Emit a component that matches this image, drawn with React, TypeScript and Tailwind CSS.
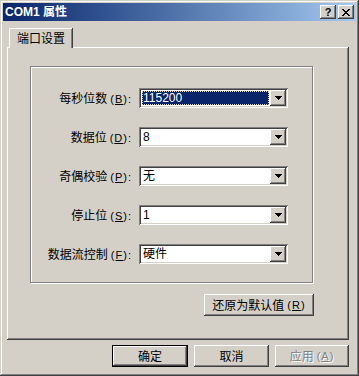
const raised =
  'bg-[#d4d0c8] shadow-[inset_-1px_-1px_#404040,inset_1px_1px_#fff,inset_-2px_-2px_#808080]'
const sunken =
  'bg-white shadow-[inset_1px_1px_#808080,inset_-1px_-1px_#fff,inset_2px_2px_#404040,inset_-2px_-2px_#d4d0c8]'

function Arrow() {
  return (
    <svg width="7" height="4" viewBox="0 0 7 4" shapeRendering="crispEdges">
      <rect x="0" y="0" width="7" height="1" fill="#000" />
      <rect x="1" y="1" width="5" height="1" fill="#000" />
      <rect x="2" y="2" width="3" height="1" fill="#000" />
      <rect x="3" y="3" width="1" height="1" fill="#000" />
    </svg>
  )
}

function Key({ k, colon }: { k: string; colon?: boolean }) {
  return (
    <span className="ml-[3px] tracking-[1px] font-['Liberation_Sans',sans-serif] text-[11px]">
      (<u>{k}</u>){colon ? ':' : ''}
    </span>
  )
}

function Combo({ value, selected }: { value: string; selected?: boolean }) {
  return (
    <div className={`w-[149px] h-[20px] p-[2px] flex ${sunken}`}>
      <div className="flex-1 flex items-center pl-[1px] pr-[1px]">
        {selected ? (
          <span className="w-full h-[14px] flex items-center bg-[#0a246a] text-white outline-1 outline-dotted outline-[#d4d0c8] -outline-offset-1 pl-[1px] font-['Liberation_Sans','Noto_Sans_CJK_SC',sans-serif] text-[12px]">
            {value}
          </span>
        ) : (
          <span className="pl-[1px] font-['Liberation_Sans','Noto_Sans_CJK_SC',sans-serif] text-[12px]">{value}</span>
        )}
      </div>
      <div className={`w-[16px] h-[16px] flex items-center justify-center ${raised}`}>
        <Arrow />
      </div>
    </div>
  )
}

function Row({ label, k, value, selected }: { label: string; k: string; value: string; selected?: boolean }) {
  return (
    <div className="flex items-center h-[20px]">
      <div className="w-[101px] text-right whitespace-nowrap">
        {label}
        <Key k={k} colon />
      </div>
      <div className="ml-[7px]">
        <Combo value={value} selected={selected} />
      </div>
    </div>
  )
}

export default function App() {
  return (
    <div className="w-[359px] h-[376px] bg-[#d4d0c8] p-[3px] flex flex-col shadow-[inset_-1px_-1px_#404040,inset_1px_1px_#d4d0c8,inset_-2px_-2px_#808080,inset_2px_2px_#fff] font-['Noto_Sans_CJK_SC',sans-serif] text-[12px] text-black leading-none">
      {/* title bar */}
      <div className="h-[18px] flex items-center justify-between bg-gradient-to-r from-[#0a246a] to-[#a6caf0] pl-[2px] pr-[2px]">
        <span className="text-white font-bold text-[12px] font-['Liberation_Sans','Noto_Sans_CJK_SC',sans-serif]">COM1 属性</span>
        <div className="flex gap-[2px]">
          <div className={`w-[16px] h-[14px] flex items-center justify-center ${raised}`}>
            <span className="font-['Liberation_Sans',sans-serif] font-bold text-[11px] leading-none">?</span>
          </div>
          <div className={`w-[16px] h-[14px] flex items-center justify-center ${raised}`}>
            <svg width="8" height="7" viewBox="0 0 8 7" shapeRendering="crispEdges">
              <path d="M0 0h2v1h1v1h2V1h1V0h2v1H7v1H6v1H5v1h1v1h1v1h1v1H6V6H5V5H3v1H2v1H0V6h1V5h1V4h1V3H2V2H1V1H0z" fill="#000" />
            </svg>
          </div>
        </div>
      </div>

      {/* tab strip */}
      <div className="pl-[6px] pt-[7px] flex">
        <div className="relative z-10 h-[20px] w-[63px] -mb-[1px] bg-[#d4d0c8] rounded-tl-[2px] border-l border-t border-white shadow-[inset_-1px_0_#808080,1px_0_#404040] flex items-start justify-center pt-[3px]">
          端口设置
        </div>
      </div>

      {/* tab panel */}
      <div className="ml-[4px] w-[342px] h-[293px] flex flex-col shadow-[inset_-1px_-1px_#404040,inset_1px_1px_#fff,inset_-2px_-2px_#808080]">
        <div className="ml-[23px] mt-[19px] w-[283px] h-[217px] border border-[#808080] shadow-[1px_1px_#fff,inset_1px_1px_#fff] pt-[21px] flex flex-col gap-[19px]">
          <Row label="每秒位数" k="B" value="115200" selected />
          <Row label="数据位" k="D" value="8" />
          <Row label="奇偶校验" k="P" value="无" />
          <Row label="停止位" k="S" value="1" />
          <Row label="数据流控制" k="F" value="硬件" />
        </div>
        <div className={`ml-[197px] mt-[11px] w-[110px] h-[22px] flex items-center justify-center ${raised}`}>
          还原为默认值<Key k="R" />
        </div>
      </div>

      {/* bottom buttons */}
      <div className="mt-[5px] ml-[109px] flex gap-[6px]">
        <div className="w-[76px] h-[22px] border border-black">
          <div className={`w-full h-full flex items-center justify-center ${raised}`}>确定</div>
        </div>
        <div className={`w-[75px] h-[22px] flex items-center justify-center ${raised}`}>取消</div>
        <div className={`w-[74px] h-[22px] flex items-center justify-center text-[#808080] [text-shadow:1px_1px_#fff] ${raised}`}>
          应用<Key k="A" />
        </div>
      </div>
    </div>
  )
}
